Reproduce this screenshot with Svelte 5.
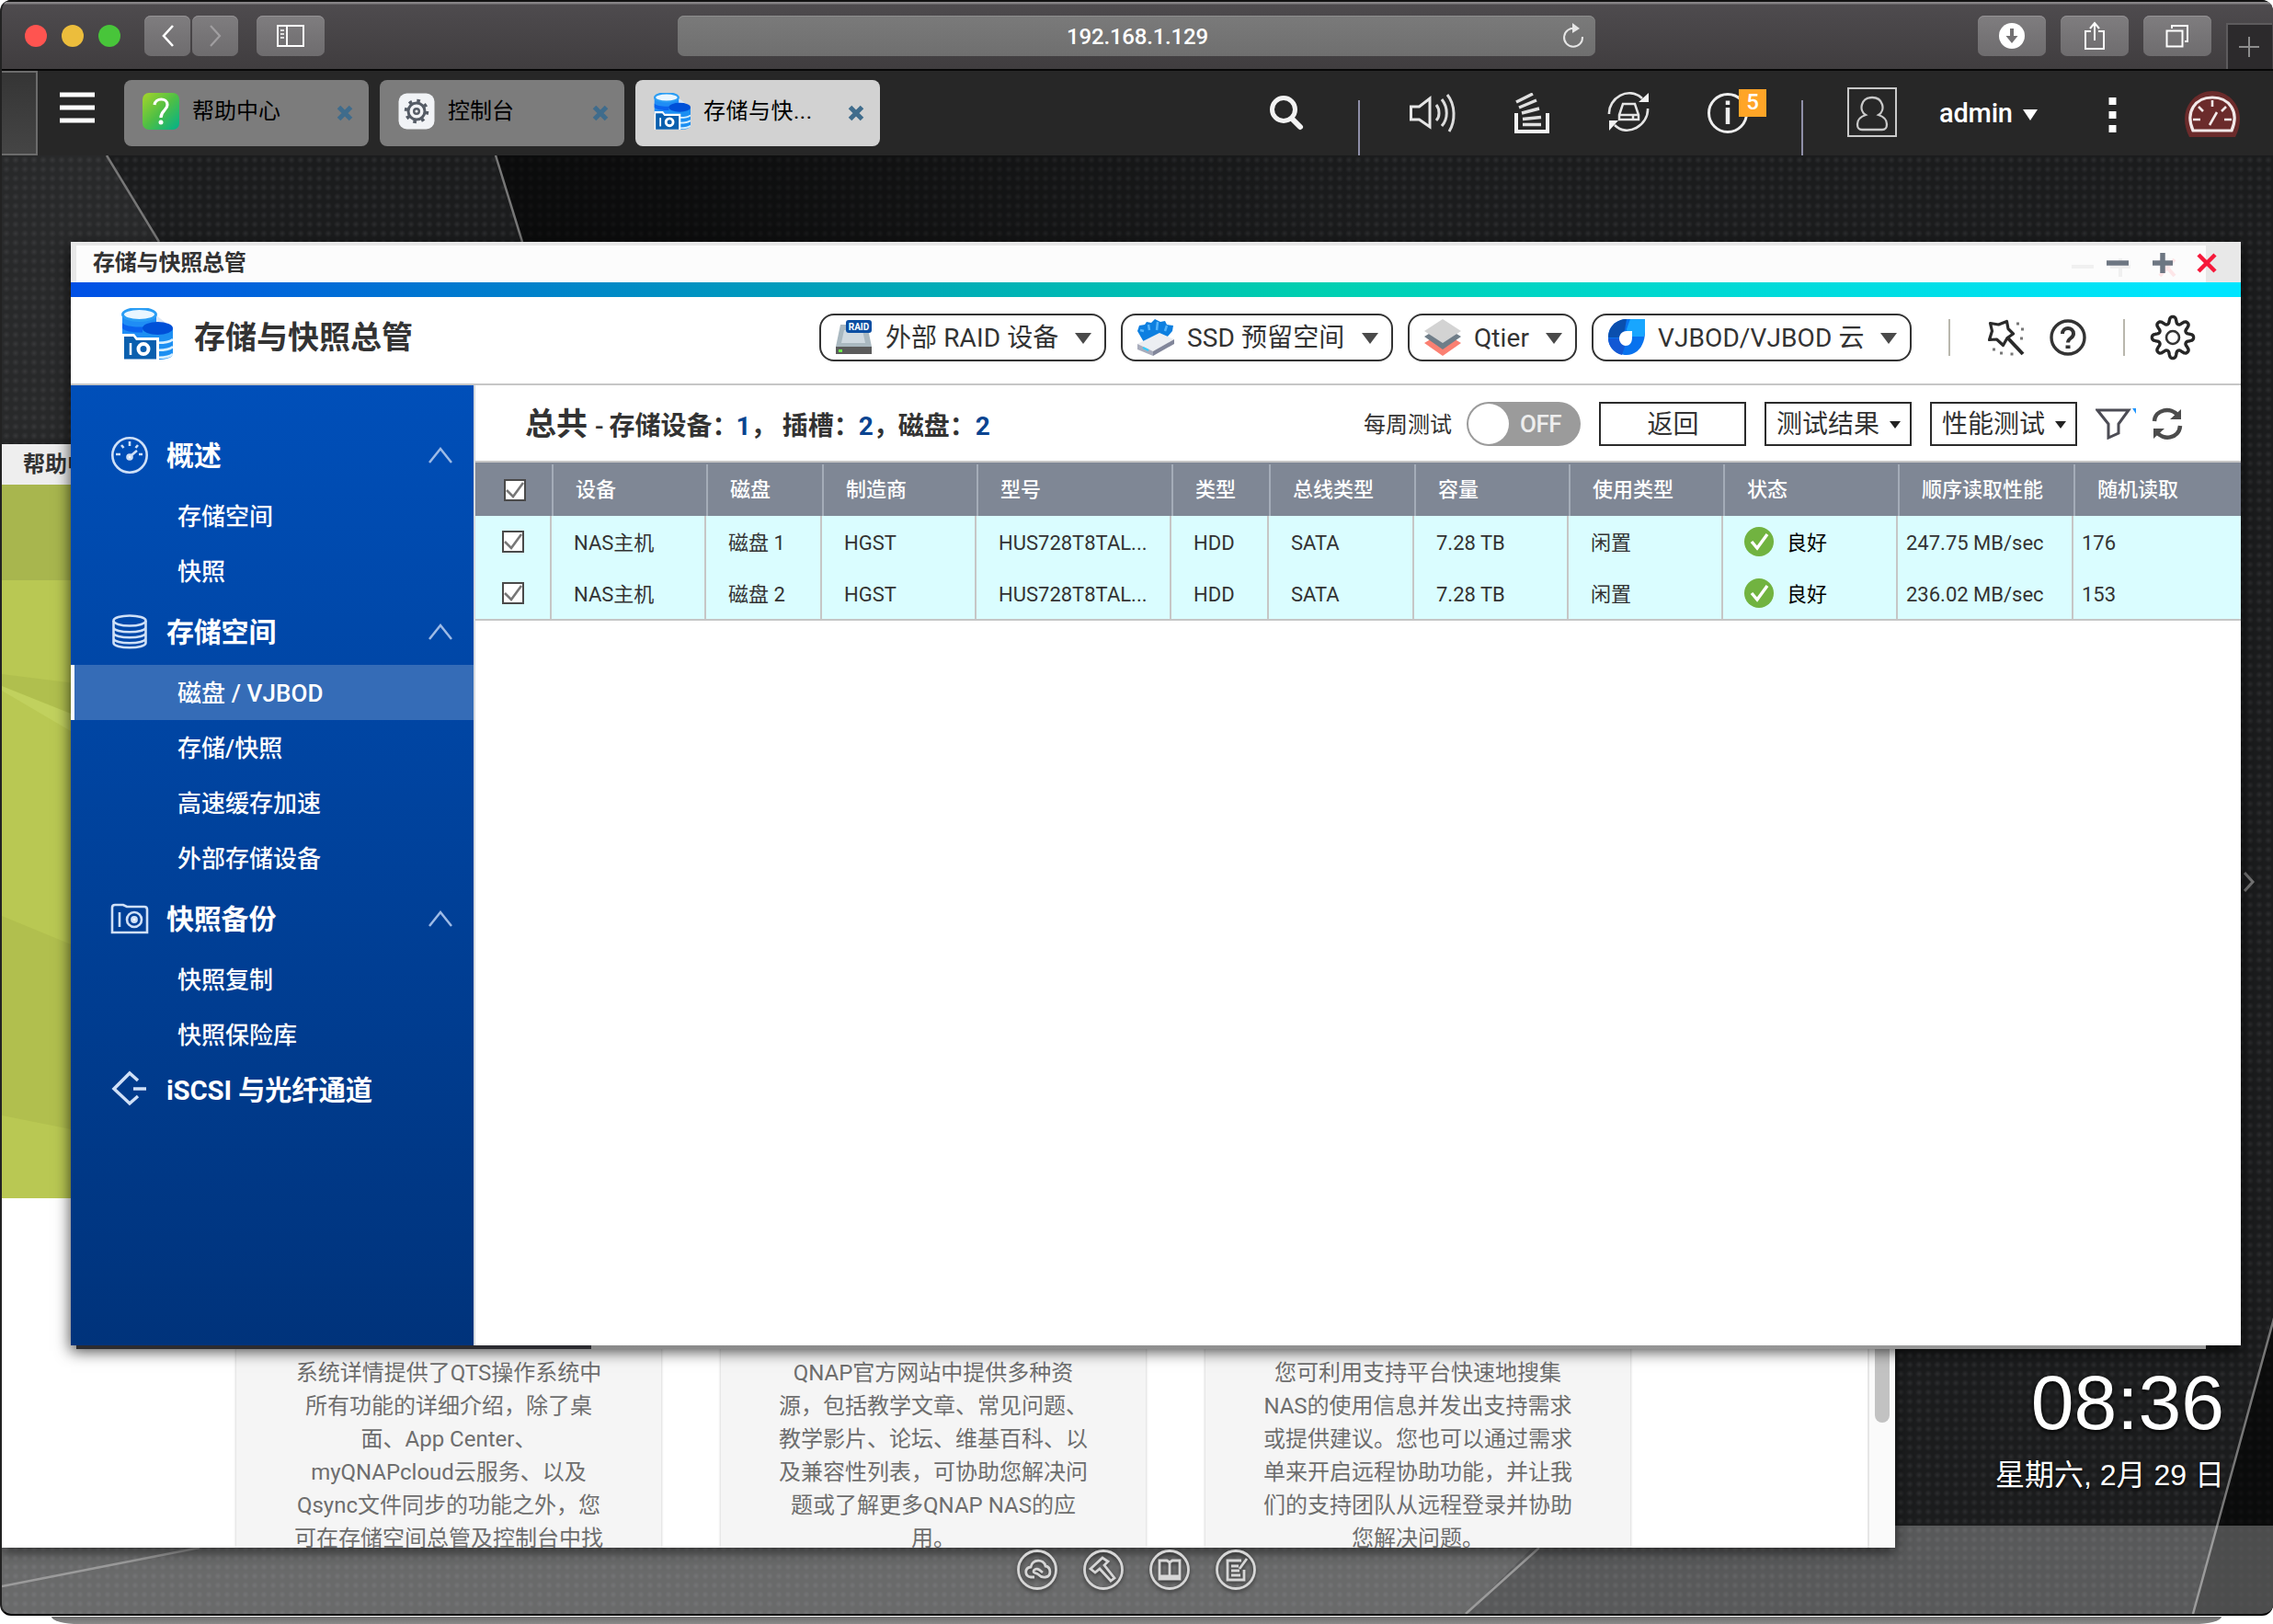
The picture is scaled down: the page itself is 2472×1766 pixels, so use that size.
<script>
  const tabs = [
    { label: '帮助中心', icon: 'help', active: false },
    { label: '控制台', icon: 'panel', active: false },
    { label: '存储与快...', icon: 'storage', active: true }
  ];

  const nav = [
    { label: '概述', icon: 'gauge', items: ['存储空间', '快照'] },
    { label: '存储空间', icon: 'disks', items: ['磁盘 / VJBOD', '存储/快照', '高速缓存加速', '外部存储设备'] },
    { label: '快照备份', icon: 'camera', items: ['快照复制', '快照保险库'] },
    { label: 'iSCSI 与光纤通道', icon: 'iscsi', items: [] }
  ];
  const selected = '磁盘 / VJBOD';

  const menus = [
    { label: '外部 RAID 设备', icon: 'raid', cls: 'm1' },
    { label: 'SSD 预留空间', icon: 'ssd', cls: 'm2' },
    { label: 'Qtier', icon: 'qtier', cls: 'm3' },
    { label: 'VJBOD/VJBOD 云', icon: 'vjbod', cls: 'm4' }
  ];

  const columns = ['设备', '磁盘', '制造商', '型号', '类型', '总线类型', '容量', '使用类型', '状态', '顺序读取性能', '随机读取'];
  const rows = [
    ['NAS主机', '磁盘 1', 'HGST', 'HUS728T8TAL...', 'HDD', 'SATA', '7.28 TB', '闲置', '良好', '247.75 MB/sec', '176'],
    ['NAS主机', '磁盘 2', 'HGST', 'HUS728T8TAL...', 'HDD', 'SATA', '7.28 TB', '闲置', '良好', '236.02 MB/sec', '153']
  ];

  const cards = [
    ['系统详情提供了QTS操作系统中', '所有功能的详细介绍，除了桌', '面、App Center、', 'myQNAPcloud云服务、以及', 'Qsync文件同步的功能之外，您', '可在存储空间总管及控制台中找'],
    ['QNAP官方网站中提供多种资', '源，包括教学文章、常见问题、', '教学影片、论坛、维基百科、以', '及兼容性列表，可协助您解决问', '题或了解更多QNAP NAS的应', '用。'],
    ['您可利用支持平台快速地搜集', 'NAS的使用信息并发出支持需求', '或提供建议。您也可以通过需求', '单来开启远程协助功能，并让我', '们的支持团队从远程登录并协助', '您解决问题。']
  ];

  // Outline of an eight-toothed gear: the radius swings between valley and tooth.
  const gearPath =
    'M' +
    Array.from({ length: 128 }, (_, k) => {
      const a = (k / 128) * Math.PI * 2;
      const r = 19 + 3.6 * Math.tanh(1.5 * Math.cos(8 * a)) / Math.tanh(1.5);
      return `${(25 + r * Math.sin(a)).toFixed(2)} ${(25 - r * Math.cos(a)).toFixed(2)}`;
    }).join('L') +
    'z';
</script>

{#snippet storageIcon(cls)}
  <svg class={cls} viewBox="0 0 56 56">
    <path d="M38 8L56 22V30H38z" fill="#dbe6f5" />
    <path d="M1 6v26c0 5 37 5 37 0V6z" fill="#1f8df5" />
    <path d="M1 16c4 6 33 6 37 0v6c-5 6-32 6-37 0z" fill="#0a63ee" />
    <ellipse cx="19.500" cy="7" rx="18" ry="6.500" fill="#eaf6ff" stroke="#2a9df4" stroke-width="3" />
    <path d="M23 22v28c0 8 33 8 33 0V22z" fill="#1c8ff2" />
    <path d="M24 34c6 5 27 5 32 0M24 42c6 5 27 5 32 0M24 50c6 5 27 5 32 0" stroke="#d6efff" stroke-width="2.500" fill="none" />
    <ellipse cx="39.500" cy="22" rx="16.500" ry="7" fill="#0050d8" />
    <path d="M1 28h13l3 4h24v24H1z" fill="#fff" />
    <path d="M3 31h10l3 4h22v20.500H3z" fill="#0a5fae" />
    <path d="M10 38v13" stroke="#fff" stroke-width="2.500" />
    <circle cx="24" cy="44.500" r="5.500" fill="none" stroke="#fff" stroke-width="4" />
  </svg>
{/snippet}

{#snippet caret()}
  <svg class="caret" viewBox="0 0 18 12"><path d="M0 0h18L9 12z" fill="#4a4a4a" /></svg>
{/snippet}

{#snippet checkbox()}
  <svg class="box" viewBox="0 0 24 24">
    <rect x="1" y="1" width="22" height="22" fill="#fff" stroke="#4a4a4a" stroke-width="2" />
    <path d="M3 12l7 7L21 4" fill="none" stroke="#777" stroke-width="2.600" />
  </svg>
{/snippet}

<div class="screen">
  <div class="browser">
    <header class="chrome">
      <div class="lights"><i class="red"></i><i class="yellow"></i><i class="green"></i></div>
      <div class="pair">
        <span class="cbtn narrow"><svg viewBox="0 0 16 26" width="16" height="26"><path d="M14 2L4 13l10 11" fill="none" stroke="#fff" stroke-width="2.600" /></svg></span>
        <span class="cbtn narrow"><svg viewBox="0 0 16 26" width="16" height="26"><path d="M3 2l10 11L3 24" fill="none" stroke="#a09ea0" stroke-width="2.200" /></svg></span>
      </div>
      <span class="cbtn wide">
        <svg viewBox="0 0 30 24" width="30" height="24"><path d="M1 1h28v22H1zM11 1v22" fill="none" stroke="#fff" stroke-width="2" /><path d="M4 6h4M4 10h4M4 14h4" stroke="#ddd" stroke-width="2" /></svg>
      </span>
      <div class="address">
        <span>192.168.1.129</span>
        <svg viewBox="0 0 24 28" width="24" height="28"><path d="M14 6A10 10 0 1 0 22 15" fill="none" stroke="#e6e6e6" stroke-width="2" /><path d="M11 0v11l8-5z" fill="#e6e6e6" /></svg>
      </div>
      <div class="tools">
        <span class="cbtn wide"><svg viewBox="0 0 28 28" width="28" height="28"><circle cx="14" cy="14" r="14" fill="#fff" /><path d="M14 6v13" stroke="#727072" stroke-width="4" /><path d="M7.500 14h13L14 22z" fill="#727072" /></svg></span>
        <span class="cbtn wide"><svg viewBox="0 0 24 32" width="24" height="32"><path d="M8 11H2v19h20V11h-6M12 21V3M7 8l5-6 5 6" fill="none" stroke="#fff" stroke-width="2" /></svg></span>
        <span class="cbtn wide"><svg viewBox="0 0 26 26" width="26" height="26"><path d="M1.500 7.500h17v17h-17zM7 5V2h17v17h-3" fill="none" stroke="#fff" stroke-width="2" /></svg></span>
      </div>
      <span class="newtab"><svg viewBox="0 0 24 24" width="24" height="24"><path d="M12 1v22M1 12h22" stroke="#8c8c8c" stroke-width="2" /></svg></span>
    </header>

    <nav class="qts">
      <div class="stub"></div>
      <svg class="burger" viewBox="0 0 38 36"><path d="M0 3h38M0 17h38M0 31h38" stroke="#fff" stroke-width="5" /></svg>
      {#each tabs as t}
        <div class="tab" class:active={t.active}>
          {#if t.icon === 'help'}
            <svg class="ticon" viewBox="0 0 40 40">
              <defs><linearGradient id="hg" x1="0" y1="0" x2="1" y2="1"><stop offset="0" stop-color="#a6d52a" /><stop offset="0.500" stop-color="#4fbf45" /><stop offset="1" stop-color="#00b18a" /></linearGradient></defs>
              <rect width="40" height="40" rx="7" fill="url(#hg)" />
              <path d="M13 13c1-8 14-8 14 0 0 6-7 6-7 14" fill="none" stroke="#fff" stroke-width="3.200" />
              <circle cx="20" cy="32" r="2.500" fill="#fff" />
            </svg>
          {:else if t.icon === 'panel'}
            <svg class="ticon" viewBox="0 0 40 40">
              <rect x="0.500" y="0.500" width="39" height="39" rx="9" fill="#f1f3f6" />
              <circle cx="20" cy="20" r="9" fill="none" stroke="#555c66" stroke-width="3" />
              <circle cx="20" cy="20" r="11.500" fill="none" stroke="#555c66" stroke-width="3.500" stroke-dasharray="3.600 5.430" />
              <circle cx="20" cy="20" r="2.800" fill="none" stroke="#555c66" stroke-width="2.400" />
            </svg>
          {:else}
            {@render storageIcon('ticon')}
          {/if}
          <span class="tlabel">{t.label}</span>
          <svg class="tclose" viewBox="0 0 18 18"><path d="M2.500 2.500l13 13M15.500 2.500l-13 13" stroke="#3f6c8c" stroke-width="5" /></svg>
        </div>
      {/each}
      <div class="status">
        <svg class="search" viewBox="0 0 40 40"><circle cx="17" cy="16" r="12.500" fill="none" stroke="#f2f2f2" stroke-width="5" /><path d="M26 26l9 9" stroke="#f2f2f2" stroke-width="6" stroke-linecap="round" /></svg>
        <i class="vline"></i>
        <svg class="vol" viewBox="0 0 52 44"><path d="M1.500 15h9L22 6v31L10.500 29h-9z" fill="none" stroke="#e6e6e6" stroke-width="3" /><path d="M29 13c4 5 4 13 0 17M35 7c7 9 7 21 0 29M41 2c9 11 9 29 2 40" fill="none" stroke="#dcdcdc" stroke-width="3" /></svg>
        <svg class="stack" viewBox="0 0 40 44"><path d="M2 22v20h34V22" fill="none" stroke="#f4f4f4" stroke-width="4" /><path d="M9 34.500h20M9 28.500l20-2M8 22l19-5M5 16l19-8M2 10l18-9" stroke="#e0e0e0" stroke-width="3.400" /></svg>
        <svg class="sync" viewBox="0 0 46 46"><path d="M2 25C1 8 23-6 38 8M44 19c1 18-22 32-36 18" fill="none" stroke="#e4e4e4" stroke-width="2.600" /><path d="M34 12h11V2zM2 43V32h10z" fill="#f2f2f2" /><path d="M17 14h13l4 12v5H13v-5zM13 26h21M28 27v3" fill="none" stroke="#e4e4e4" stroke-width="2.500" /></svg>
        <div class="info">
          <svg viewBox="0 0 46 46"><circle cx="23" cy="23" r="20.500" fill="none" stroke="#eee" stroke-width="3" /><path d="M23 17v18" stroke="#eee" stroke-width="4.500" /><path d="M23 9.500v4.500" stroke="#eee" stroke-width="4.500" /></svg>
          <b>5</b>
        </div>
        <i class="vline two"></i>
        <svg class="user" viewBox="0 0 54 54"><rect x="1" y="1" width="52" height="52" fill="none" stroke="#c9c9c9" stroke-width="2" /><path d="M20 30c-8-5-5-19 7-19s15 14 7 19c6 2 9 5 9 10 0 5-2 6-5 6H16c-3 0-5-1-5-6 0-5 3-8 9-10z" fill="none" stroke="#c9c9c9" stroke-width="2.300" /></svg>
        <span class="admin">admin</span>
        <svg class="acaret" viewBox="0 0 16 12"><path d="M0 0h16L8 12z" fill="#fff" /></svg>
        <svg class="dots" viewBox="0 0 8 38"><path d="M0 0h8v8H0zM0 15h8v8H0zM0 30h8v8H0z" fill="#fff" /></svg>
        <svg class="dash" viewBox="0 0 62 50"><path d="M6 50C-8 22 10 0 31 0s39 22 25 50z" fill="#6b2b2b" /><path d="M10 43C1 22 13 7 31 7s30 15 21 36z" fill="none" stroke="#f2e9e9" stroke-width="3.200" /><path d="M31 10v7M16 17l5 5M46 17l-5 5M10 31h8M52 31h-8M28 37l8-14" stroke="#f2e9e9" stroke-width="2.600" /></svg>
      </div>
    </nav>

    <main class="desktop">
      <svg class="rays" viewBox="0 0 2472 1586" preserveAspectRatio="none">
        <defs><linearGradient id="shade" x1="0" x2="1"><stop offset="0" stop-color="#000" stop-opacity="0.600" /><stop offset="0.200" stop-color="#000" stop-opacity="0.550" /><stop offset="1" stop-color="#000" stop-opacity="0" /></linearGradient></defs>
        <path d="M0 0H114L300 307V400H0z" fill="#fff" opacity="0.060" />
        <path d="M537 0L566 94H1500V0z" fill="url(#shade)" />
        <path d="M2472 1261L2383 1586H2472z" fill="#000" opacity="0.600" />
        <path d="M0 1400H1780L1592 1586H0z" fill="#fff" opacity="0.100" />
        <path d="M114 0l57 94M537 0l29 94M2472 1261l-89 325M0 1556l215-42M1672 1514l-80 72" stroke="#777" stroke-width="2.500" fill="none" />
      </svg>
      <div class="clock">
        <div class="time">08:36</div>
        <div class="date">星期六, 2月 29 日</div>
      </div>
      <svg class="next" viewBox="0 0 12 22"><path d="M1 1l9 10-9 10" fill="none" stroke="#777" stroke-width="3" /></svg>
      <div class="dock"></div>

      <section class="help">
        <div class="htitle">帮助中心</div>
        <div class="hband"></div>
        <div class="hgreen">
          <svg viewBox="0 0 80 672" preserveAspectRatio="none">
            <path d="M0 102l80 10v38L0 118z" fill="#b0bf4e" /><path d="M0 115l80 32v20L0 120z" fill="#c1d15e" /><path d="M0 365l80 33v200L0 582z" fill="#b1bf4e" />
          </svg>
        </div>
        <div class="hbody">
          <div class="cards">
            {#each cards as lines}
              <article>{#each lines as line}<p>{line}</p>{/each}</article>
            {/each}
          </div>
          <div class="track"><i></i></div>
        </div>
      </section>

      <div class="launch">
        <svg viewBox="0 0 46 46"><circle cx="23" cy="23" r="20.500" /><path d="M20 31h-4c-7-1-7-10 0-11 2-9 14-9 16-1 6 1 7 11 0 12-4 1-6-1-8-3s-5-1-5-3 3-4 6-2l4 3" /></svg>
        <svg viewBox="0 0 46 46"><circle cx="23" cy="23" r="20.500" /><path d="M9 22l13-12 6 4-4 4 11 14-4 3-12-13-5 4z" /></svg>
        <svg viewBox="0 0 46 46"><circle cx="23" cy="23" r="20.500" /><path d="M23 14v20M12 13h8l3 2 3-2h8v20H12zM12 30h22" /></svg>
        <svg viewBox="0 0 46 46"><circle cx="23" cy="23" r="20.500" /><path d="M29 13H14v21h18V23M18 19h8M18 24h9M18 29h10M35 11l-8 11" /></svg>
      </div>

      <section class="win">
        <div class="wtitle">
          <div class="wname">存储与快照总管</div>
          <svg class="wctl" viewBox="0 0 190 40">
            <path d="M8 24h24M50 24h22M61 15v20" stroke="#f0f0f0" stroke-width="4" />
            <path d="M104 16l16 18M120 16l-16 18" stroke="#fde6e8" stroke-width="4" />
            <path d="M46 20h24M96 20h22M107 9v22" stroke="#6d7682" stroke-width="5.500" />
            <path d="M146 11l18 18M164 11l-18 18" stroke="#f6183a" stroke-width="4.500" />
          </svg>
        </div>
        <div class="rainbow"></div>
        <div class="whead">
          {@render storageIcon('logo')}
          <h1>存储与快照总管</h1>
          <div class="menus">
            {#each menus as m}
              <div class="menu {m.cls}">
                <svg class="micon" viewBox="0 0 40 40">
                  {#if m.icon === 'raid'}
                    <path d="M5 6h29l5 24H0z" fill="#a9b8c0" /><path d="M9 12h20l3 14H6z" fill="#cfd9e0" /><path d="M0 30h39v8H0z" fill="#5b5b5b" /><path d="M3 33h4v3H3z" fill="#6cf04a" />
                    <rect x="11" y="1" width="28" height="14" rx="3" fill="#0b4ea2" /><text x="25" y="12" text-anchor="middle" font-size="10" font-weight="700" fill="#fff">RAID</text>
                  {:else if m.icon === 'ssd'}
                    <path d="M0 13l2-6 6-1 2-3 5 1 4-4 6 3 5-1 2 4 7 1-1 6-7 8-12-2-12 6z" fill="#0d7fe0" /><path d="M3 12l4 1M12 6l1 6M22 3l-1 9M32 7l-2 6" stroke="#55b4fa" stroke-width="2.500" />
                    <path d="M0 27l24-12 16 7-23 13z" fill="#eceef2" /><path d="M0 27l17 8v5L0 33z" fill="#a8acbc" /><path d="M17 35l23-13v5L17 40z" fill="#82869a" /><path d="M6 31l6 3" stroke="#3cf" stroke-width="2" />
                  {:else if m.icon === 'qtier'}
                    <path d="M0 26l20-12 20 12-20 14z" fill="#fb8072" /><path d="M0 19l20-12 20 12-20 14z" fill="#6f7d88" /><path d="M0 13L20 0l20 13-20 13z" fill="#d3d3d3" />
                  {:else}
                    <path d="M40 0v14c0 14-8 25-20 25C8 39 0 30 0 20 0 8 9 0 22 0z" fill="#0872ee" /><path d="M40 0v14l-1 5H22l-2-8 4-11z" fill="#18a6ff" /><path d="M0 20C0 8 9 0 20 0l-2 12-6 8z" fill="#0a4fae" /><path d="M0 21h12l6 9-3 9C6 37 0 29 0 21z" fill="#1358d4" /><path d="M26 13v7c0 6-3 9-7 9s-7-4-7-8 3-8 8-8z" fill="#fff" />
                  {/if}
                </svg>
                <span>{m.label}</span>
                {@render caret()}
              </div>
            {/each}
          </div>
          <i class="sep s1"></i>
          <svg class="wand" viewBox="0 0 40 40"><path d="M2.500 4.500l9 1.500 9-3.500 1.500 8 5.500 5.500-6.500 4.500-4.500 8-7-6.500-8 .5 3-9.500z" fill="none" stroke="#2a2a2a" stroke-width="3.200" stroke-linejoin="round" /><path d="M22 21l16 17" stroke="#2a2a2a" stroke-width="4" /><path d="M31 5h3M36 11h3M35 21h3M5 33h3M13 37h3M24.500 38h3" stroke="#777" stroke-width="3" /></svg>
          <svg class="hlp" viewBox="0 0 40 40"><circle cx="20" cy="20" r="18" fill="none" stroke="#333" stroke-width="3.400" /><path d="M14 16c0-8 12-8 12 0 0 5-6 4.500-6 9.500" fill="none" stroke="#333" stroke-width="4" /><path d="M17.500 28.500h5v3.500h-5z" fill="#333" /></svg>
          <i class="sep s2"></i>
          <svg class="gear" viewBox="0 0 50 50"><path d={gearPath} fill="none" stroke="#262626" stroke-width="3.400" stroke-linejoin="round" /><circle cx="25" cy="25" r="7" fill="none" stroke="#333" stroke-width="2.600" /></svg>
        </div>

        <div class="wmain">
          <aside>
            {#each nav as g}
              <div class="group" class:last={g.items.length === 0}>
                <svg class="gicon" viewBox="0 0 42 42" fill="none" stroke="#cfe0f7" stroke-width="2.600">
                  {#if g.icon === 'gauge'}
                    <circle cx="21" cy="21" r="18.700" /><path d="M21 6v5M12 10l2.500 3M30 10l-2.500 3M6 20h5M31 20h4M23 21l6-5" /><circle cx="21" cy="23" r="2.500" fill="#fff" />
                  {:else if g.icon === 'disks'}
                    <ellipse cx="21" cy="9" rx="17.500" ry="5.500" /><path d="M3.500 9v24c0 7 35 7 35 0V9M3.500 16c0 7 35 7 35 0M3.500 22c0 7 35 7 35 0M3.500 28c0 7 35 7 35 0" />
                  {:else if g.icon === 'camera'}
                    <path d="M2 9c0-2 1-3 3-3h9l4 2h19c2 0 3 1 3 3v25H2zM10 14v16" /><circle cx="26" cy="22" r="8" /><circle cx="26" cy="22" r="2.600" fill="#fff" />
                  {:else}
                    <path d="M31 12L22 4 5 21l17 16 9-8M26 21h14" stroke-width="3.500" />
                  {/if}
                </svg>
                <span>{g.label}</span>
                {#if g.items.length}
                  <svg class="chev" viewBox="0 0 26 18"><path d="M1 17L13 2l12 15" fill="none" stroke="#9dbbe6" stroke-width="2.500" /></svg>
                {/if}
              </div>
              {#each g.items as item}
                <div class="item" class:sel={item === selected}>{item}</div>
              {/each}
            {/each}
          </aside>

          <div class="content">
            <div class="bar">
              <div class="summary"><b class="big">总共</b><b class="dashm">-</b><b>存储设备：</b><em class="e1">1</em><b class="c1">，</b><b>插槽：</b><em class="e2">2</em><b class="c2">，</b><b>磁盘：</b><em>2</em></div>
              <span class="weekly">每周测试</span>
              <div class="toggle"><i></i><span>OFF</span></div>
              <div class="btn">返回</div>
              <div class="btn drop">测试结果<svg viewBox="0 0 12 8"><path d="M0 0h12L6 8z" fill="#222" /></svg></div>
              <div class="btn drop">性能测试<svg viewBox="0 0 12 8"><path d="M0 0h12L6 8z" fill="#222" /></svg></div>
              <svg class="filter" viewBox="0 0 44 34"><path d="M2 2h34L25 17v10l-11 5V17z" fill="none" stroke="#4c4c55" stroke-width="3" /><path d="M40 0h4v6z" fill="#1f95ff" /></svg>
              <svg class="refresh" viewBox="0 0 34 36"><path d="M3 15C4 2 21-1 29 9M31 20c-1 14-19 17-26 6" fill="none" stroke="#4c4c4c" stroke-width="4.500" /><path d="M32 2v11H20zM2 34V23h12z" fill="#4c4c4c" /></svg>
            </div>
            <div class="thead grid">
              <div class="ck">{@render checkbox()}</div>
              {#each columns as c}<div><span>{c}</span></div>{/each}
            </div>
            <div class="tbody">
              {#each rows as r}
                <div class="trow grid">
                  <div class="ck">{@render checkbox()}</div>
                  {#each r as cell, i}
                    <div class:num={i > 8} class:state={i === 8}>
                      {#if i === 8}
                        <svg class="ok" viewBox="0 0 32 32"><circle cx="16" cy="16" r="16" fill="#71b340" /><path d="M8 16l6 7L25 8" fill="none" stroke="#fff" stroke-width="3.400" /></svg>
                      {/if}
                      <span>{cell}</span>
                    </div>
                  {/each}
                </div>
              {/each}
            </div>
          </div>
        </div>
        <div class="under"></div>
      </section>
    </main>
  </div>
  <div class="ground"></div>
</div>

<style>
  :global(body) { background: #fff; }
  .screen { width: 2472px; height: 1766px; position: relative; overflow: hidden; font-family: Roboto, 'Noto Sans CJK SC', sans-serif; color: #333; }
  .screen :global(svg) { display: block; flex: none; }
  .ground { height: 8px; margin: 1px 56px 0; background: linear-gradient(#6f6f6f, #8a8a8a); border-radius: 0 0 30px 30px / 0 0 8px 8px; }
  .browser { box-sizing: border-box; width: 2472px; height: 1757px; border-radius: 12px; overflow: hidden; border-left: 2px solid #222; border-bottom: 2px solid #000; background: #222; display: flex; flex-direction: column; }

  .chrome { box-sizing: border-box; height: 77px; border-top: 2px solid #111; border-bottom: 2px solid #070707; background: linear-gradient(#858385 0 2px, #4e4b4e 3px, #403d3f); display: flex; align-items: flex-start; padding: 15px 0 0 25px; flex: none; }
  .lights { display: flex; gap: 16px; height: 44px; align-items: center; }
  .lights i { width: 24px; height: 24px; border-radius: 50%; }
  .red { background: #ff5450; }
  .yellow { background: #ecbd3c; }
  .green { background: #48c53a; }
  .cbtn { height: 44px; border-radius: 7px; background: linear-gradient(#7f7d7f, #6e6c6e); display: flex; align-items: center; justify-content: center; box-shadow: inset 0 1px #959395; }
  .pair { display: flex; gap: 2px; margin: 0 20px 0 26px; }
  .narrow { width: 50px; }
  .wide { width: 74px; }
  .address { box-sizing: border-box; width: 998px; height: 44px; margin-left: 384px; border-radius: 7px; background: linear-gradient(#7a7a7a, #6f6f6f); box-shadow: inset 0 1px #8e8e8e; display: flex; align-items: center; padding: 0 12px 0 38px; color: #fff; font-size: 24px; font-weight: 500; }
  .address span { flex: 1; text-align: center; line-height: 28px; padding-top: 2px; letter-spacing: -0.2px; }
  .tools { display: flex; gap: 16px; margin-left: 416px; }
  .newtab { box-sizing: border-box; width: 50px; height: 50px; margin: 8px 0 0 16px; border-left: 2px solid #5d5b5d; border-top: 2px solid #5d5b5d; background: #2c2a2c; display: flex; align-items: center; padding-left: 11px; }

  .qts { height: 92px; background: #272727; display: flex; align-items: flex-start; flex: none; }
  .stub { box-sizing: border-box; width: 39px; height: 92px; background: linear-gradient(#353535, #454545); border: 2px solid #6c6c6c; border-left: 0; }
  .burger { width: 38px; height: 36px; margin: 23px 32px 0 24px; }
  .tab { box-sizing: border-box; width: 266px; height: 72px; margin: 10px 12px 0 0; border-radius: 8px; background: #7c7c7c; display: flex; align-items: center; padding: 0 17px 0 20px; color: #000; font-size: 24px; }
  .tab.active { background: #d2d2d2; }
  .tab :global(.ticon) { width: 40px; height: 40px; margin-top: -4px; }
  .tlabel { margin: -5px 0 0 14px; flex: 1; line-height: 36px; }
  .tab.active .tlabel { letter-spacing: 0.5px; }
  .tclose { width: 18px; height: 18px; }
  .status { display: flex; align-items: flex-start; margin-left: 410px; flex: 1; }
  .search { width: 40px; height: 40px; margin-top: 26px; }
  .vline { width: 2px; height: 60px; background: #8f8fa8; margin: 32px 0 0 58px; }
  .vol { width: 52px; height: 44px; margin: 24px 0 0 54px; }
  .stack { width: 40px; height: 44px; margin: 24px 0 0 62px; }
  .sync { width: 46px; height: 46px; margin: 22px 0 0 61px; }
  .info { position: relative; width: 46px; height: 46px; margin: 23px 0 0 62px; }
  .info b { position: absolute; left: 35px; top: -3px; width: 30px; height: 30px; background: #ffa527; color: #fff; font: 500 24px/29px Roboto, sans-serif; text-align: center; }
  .vline.two { margin-left: 57px; }
  .user { width: 54px; height: 54px; margin: 18px 0 0 48px; }
  .admin { margin: 28px 0 0 46px; font-size: 29px; line-height: 36px; color: #fff; font-weight: 500; letter-spacing: -0.2px; width: 80px; }
  .acaret { width: 16px; height: 12px; margin: 42px 0 0 11px; }
  .dots { width: 9px; height: 38px; margin: 29px 0 0 77px; }
  .dash { width: 62px; height: 50px; margin: 22px 0 0 73px; }

  .desktop { position: relative; flex: 1; background-color: #1b1c1d; background-image: radial-gradient(ellipse 4px 4px at 5px 5px, #2d2e30, transparent); background-size: 10px 10px; }
  .rays { position: absolute; left: 0; top: 0; width: 2472px; height: 1586px; }
  .dock { position: absolute; left: 0; right: 0; top: 1490px; bottom: 0; background: rgba(255, 255, 255, 0.27); }
  .clock { position: absolute; right: 53px; top: 1301px; width: 300px; color: #fff; font-family: 'Liberation Sans', 'Noto Sans CJK SC', sans-serif; text-align: right; text-shadow: 0 2px 4px #000; }
  .time { font-size: 84px; line-height: 110px; }
  .date { font-size: 32px; line-height: 40px; margin-top: 4px; white-space: nowrap; }
  .next { position: absolute; left: 2438px; top: 779px; width: 12px; height: 22px; }

  .help { position: absolute; left: 0; top: 314px; width: 2059px; height: 1200px; background: #fff; overflow: hidden; display: flex; flex-direction: column; box-shadow: 0 4px 14px rgba(0, 0, 0, 0.6); }
  .htitle { height: 44px; background: #eee; padding-left: 23px; font-size: 24px; line-height: 45px; font-weight: 700; flex: none; }
  .hband { height: 104px; background: #a8b64e; flex: none; }
  .hgreen { height: 672px; background: #b9c853; flex: none; }
  .hgreen svg { width: 80px; height: 672px; }
  .hbody { flex: 1; min-height: 0; display: flex; justify-content: space-between; }
  .cards { display: flex; gap: 65px; padding-left: 255px; }
  article { box-sizing: border-box; width: 462px; background: #f5f5f5; box-shadow: 0 0 3px rgba(0, 0, 0, 0.25); padding-top: 172px; text-align: center; color: #6e6e6e; font-size: 24px; }
  article p { margin: 0; line-height: 36px; white-space: nowrap; }
  .track { box-sizing: border-box; width: 30px; border-left: 2px solid #e6e6e6; background: #fafafa; padding-left: 6px; }
  .track i { display: block; width: 16px; height: 244px; background: #c2c2c2; border-radius: 8px; }
  .launch { position: absolute; left: 1103px; top: 1515px; display: flex; gap: 26px; }
  .launch svg { width: 46px; height: 46px; fill: none; stroke: #d6d6d6; stroke-width: 2.8; filter: drop-shadow(0 2px 2px rgba(0, 0, 0, 0.5)); }

  .win { position: absolute; left: 75px; top: 94px; width: 2360px; height: 1200px; background: #fff; display: flex; flex-direction: column; box-shadow: 0 6px 16px rgba(0, 0, 0, 0.75); }
  .wtitle { box-sizing: border-box; height: 44px; background: #fcfcfc; border: solid #e8e8e8; border-width: 4px 38px 0 6px; display: flex; justify-content: space-between; flex: none; }
  .wname { padding-left: 18px; font-size: 24px; line-height: 36px; font-weight: 700; margin-top: 1px; letter-spacing: -0.2px; }
  .wctl { width: 190px; height: 40px; margin: -1px -36px 0 0; position: relative; }
  .rainbow { height: 16px; background: linear-gradient(90deg, #0050e6, #00a4b8 36%, #00cfb0 57%, #00e5ff 98%); flex: none; }
  .whead { box-sizing: border-box; height: 96px; border-bottom: 2px solid #c6c6c6; display: flex; align-items: flex-start; flex: none; }
  .whead :global(.logo) { width: 56px; height: 56px; margin: 12px 0 0 55px; }
  h1 { margin: 19px -1px 0 23px; width: 681px; flex: none; font-size: 34px; line-height: 50px; font-weight: 700; white-space: nowrap; }
  .menus { display: flex; gap: 16px; margin-top: 18px; width: 1189px; flex: none; }
  .menu { box-sizing: border-box; height: 52px; border: 2px solid #333; border-radius: 16px; display: flex; align-items: center; padding: 0 14px 0 16px; font-size: 28px; white-space: nowrap; flex: none; }
  .menu span { margin: 2px 0 0 14px; flex: 1; line-height: 48px; letter-spacing: 0.1px; }
  .menu :global(.caret) { width: 18px; height: 12px; margin-top: 2px; }
  .micon { width: 40px; height: 40px; }
  .m1 { width: 312px; }
  .m2 { width: 296px; }
  .m3 { width: 184px; }
  .m4 { width: 348px; }
  .sep { width: 2px; height: 40px; background: #b9b7ad; margin-top: 24px; flex: none; }
  .s1 { margin-left: 39px; }
  .s2 { margin-left: 40px; }
  .wand { width: 40px; height: 40px; margin: 24px 0 0 41px; }
  .hlp { width: 40px; height: 40px; margin: 24px 0 0 27px; }
  .gear { width: 50px; height: 50px; margin: 19px 0 0 27px; }

  .wmain { flex: 1; display: flex; min-height: 0; }
  aside { box-sizing: border-box; width: 438px; padding-top: 40px; background: linear-gradient(#004fb9, #00337b); color: #fff; flex: none; }
  .group { height: 72px; display: flex; align-items: center; padding: 0 23px 0 43px; font-size: 30px; font-weight: 700; }
  .group.last { height: 60px; }
  .group span { margin: -4px 0 0 19px; flex: 1; letter-spacing: -0.2px; white-space: nowrap; }
  .group.last span { font-size: 29.4px; margin-top: -5px; }
  .gicon { width: 42px; height: 42px; }
  .group.last .gicon { margin: -2px 1px 0 -1px; }
  .chev { width: 26px; height: 18px; }
  .item { box-sizing: border-box; height: 60px; padding: 1px 0 0 116px; font-size: 26px; line-height: 60px; font-weight: 500; }
  .item.sel { background: #356cb7; border-left: 4px solid #fff; padding-left: 112px; letter-spacing: 0.1px; }
  .content { flex: 1; border-left: 2px solid #d5d9de; min-width: 0; }
  .bar { box-sizing: border-box; height: 84px; border-bottom: 2px solid #c6c6c6; display: flex; align-items: center; padding: 2px 0 0 54px; }
  .summary { width: 912px; margin-top: -6px; display: flex; align-items: baseline; font-size: 28px; white-space: nowrap; flex: none; }
  .big { font-size: 34px; }
  .dashm { margin: 0 6px 0 8px; font-weight: 500; }
  .e1 { margin-left: -2px; }
  .e2 { margin-left: -1px; }
  .c1 { margin-right: 6px; }
  .c2 { margin-right: -1px; }
  .summary em { font-style: normal; font-weight: 700; color: #0a4490; }
  .weekly { font-size: 24px; width: 112px; margin-top: -3px; flex: none; }
  .toggle { width: 124px; height: 48px; border-radius: 24px; background: #9b9b9b; display: flex; align-items: center; color: #eee; font-size: 26px; font-weight: 500; flex: none; }
  .toggle i { width: 44px; height: 44px; margin-left: 2px; border-radius: 50%; background: #fff; }
  .toggle span { margin: 0 0 0 12px; letter-spacing: -0.5px; }
  .btn { box-sizing: border-box; width: 160px; height: 48px; margin-left: 20px; border: 2px solid #2b2b2b; display: flex; align-items: center; justify-content: center; font-size: 28px; line-height: 44px; padding: 1px 0 0 1px; white-space: nowrap; flex: none; }
  .btn svg { width: 12px; height: 8px; margin-left: 11px; }
  .filter { width: 44px; height: 34px; margin-left: 20px; }
  .refresh { width: 34px; height: 36px; margin-left: 17px; }
  .grid { display: grid; grid-template-columns: 82px 168px 126px 168px 212px 106px 158px 168px 168px 190px 191px 1fr; }
  .grid > div { box-sizing: border-box; display: flex; align-items: center; padding-left: 24px; white-space: nowrap; font-size: 22px; }
  .grid span { line-height: 30px; }
  .grid > .ck { padding: 0; justify-content: center; }
  .grid :global(.box) { width: 24px; height: 24px; }
  .thead { height: 58px; background: #7f8795; color: #fff; padding: 2px 0 0 1px; box-sizing: border-box; font-weight: 500; }
  .thead > .ck { padding-left: 2px; }
  .thead > div + div { border-left: 2px solid #a4acb8; padding-left: 24px; }
  .tbody { background: #dafdff; border-bottom: 2px solid #c6c6c6; }
  .trow { height: 56px; }
  .trow > div + div { border-left: 2px solid #c6c6c6; margin-left: -1px; }
  .trow > div + div span { padding-top: 3px; }
  .grid > .num { padding-left: 9px; }
  .grid > .state { padding-left: 23px; color: #000; }
  .ok { width: 32px; height: 32px; margin-right: 14px; }
  .under { position: absolute; left: 6px; top: 1200px; width: 2316px; height: 4px; background: linear-gradient(90deg, #2c2c31 560px, #8a8a8a 560px, #9a9a9a); }
</style>
